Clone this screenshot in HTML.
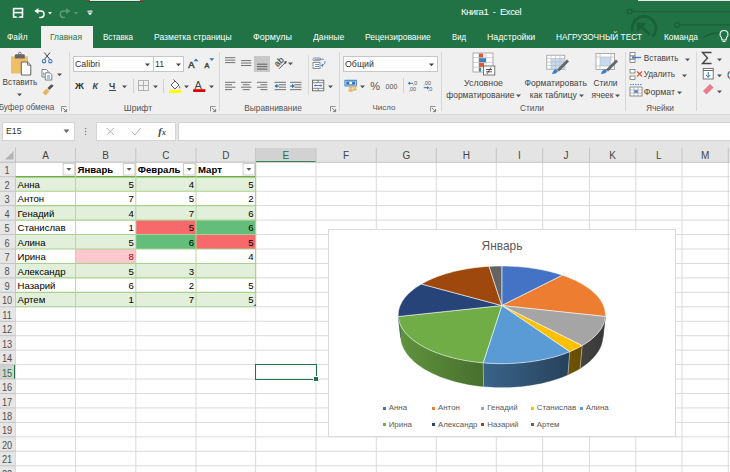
<!DOCTYPE html><html><head><meta charset="utf-8"><style>
*{box-sizing:border-box;margin:0;padding:0}
body{width:730px;height:472px;overflow:hidden;position:relative;background:#fff;font-family:"Liberation Sans",sans-serif;color:#262626}
.a{position:absolute}
.t{position:absolute;white-space:nowrap;line-height:1}
</style></head><body>

<div class="a" style="left:0;top:0;width:730px;height:48px;background:#217346"></div>
<div class="a" style="left:87px;top:0;width:56px;height:1.2px;background:#e8e8e8;border-left:3.6px solid #c8342c;border-right:3.4px solid #c8342c"></div>
<div class="a" style="left:87px;top:1.2px;width:56px;height:0.8px;background:#1a5c37"></div>
<div class="a" style="left:638px;top:0;width:92px;height:1.2px;background:#e8e8e8"></div>
<svg class="a" style="left:0;top:0" width="730" height="48">
<g stroke="#1b6039" fill="none">
<line x1="632.6" y1="11.6" x2="730" y2="11.6" stroke-width="1.3"/>
<circle cx="629.7" cy="11.6" r="2.4" stroke-width="1.4"/>
<line x1="680.2" y1="24.9" x2="730" y2="24.9" stroke-width="1.3"/>
<circle cx="677.2" cy="24.9" r="2.4" stroke-width="1.4"/>
<path d="M 632.6 31.5 A 11.9 11.9 0 1 1 652.5 36.6" stroke-width="2.9"/>
<path d="M 649.7 34.7 L 639 24.3" stroke-width="2.9"/>
<path d="M 636.6 22.4 L 646.6 23.2 L 643.5 26.5 L 640.3 29.6 L 637.4 32.2 Z" fill="#1b6039" stroke="none"/>
<path d="M 703 37.5 Q 710 33 722 32.5" stroke-width="1.4"/>
</g></svg>
<svg class="a" style="left:0;top:0" width="100" height="24">
<g fill="none" stroke="#fff" stroke-width="1.3">
<rect x="13.6" y="8.6" width="8.9" height="8.4" stroke-width="1.6"/>
<path d="M 13.6 12.6 L 22.5 12.6" stroke-width="1.6"/>
<rect x="16.6" y="15" width="2.8" height="2.5" fill="#217346" stroke="none"/>
<path d="M 34.3 11 L 38.5 8 L 38.5 14 Z" fill="#fff" stroke="none"/>
<path d="M 37.5 11 L 40.8 11 A 3.2 3.2 0 0 1 40.8 17.4 L 39.3 17.4" stroke-width="1.5"/>
</g>
<path d="M 48 12 L 52 12 L 50 14.5 Z" fill="#fff"/>
<g stroke="#5f9a78" fill="none" stroke-width="1.3">
<path d="M 67 11 L 63.5 11 A 3.2 3.2 0 0 0 63.5 17.4 L 65 17.4" stroke-width="1.5"/>
</g>
<path d="M 66.2 8 L 70.4 11 L 66.2 14 Z" fill="#5f9a78"/>
<path d="M 74 12 L 78 12 L 76 14.5 Z" fill="#5f9a78"/>
<rect x="87.5" y="10.6" width="5" height="1.1" fill="#fff"/>
<path d="M 87.5 12.6 L 92.5 12.6 L 90 15.2 Z" fill="#fff"/>
</svg>
<div class="t" style="left:460.9px;top:6.6px;font-size:9.6px;letter-spacing:-0.46px;color:#fff">Книга1&nbsp;&nbsp;-&nbsp;&nbsp;Excel</div>
<div class="a" style="left:41px;top:25.5px;width:52px;height:23px;background:#f0f0f0"></div>
<div class="t" style="left:7.4px;top:32.98px;font-size:9.30px;transform:scaleX(0.897);transform-origin:0 0;color:#fff">Файл</div>
<div class="t" style="left:50.4px;top:32.98px;font-size:9.30px;transform:scaleX(0.904);transform-origin:0 0;color:#217346">Главная</div>
<div class="t" style="left:103.2px;top:32.98px;font-size:9.30px;transform:scaleX(0.865);transform-origin:0 0;color:#fff">Вставка</div>
<div class="t" style="left:154.20000000000002px;top:32.98px;font-size:9.30px;transform:scaleX(0.920);transform-origin:0 0;color:#fff">Разметка страницы</div>
<div class="t" style="left:252.9px;top:32.98px;font-size:9.30px;transform:scaleX(0.959);transform-origin:0 0;color:#fff">Формулы</div>
<div class="t" style="left:313.2px;top:32.98px;font-size:9.30px;transform:scaleX(0.929);transform-origin:0 0;color:#fff">Данные</div>
<div class="t" style="left:365.2px;top:32.98px;font-size:9.30px;transform:scaleX(0.916);transform-origin:0 0;color:#fff">Рецензирование</div>
<div class="t" style="left:452.4px;top:32.98px;font-size:9.30px;transform:scaleX(0.832);transform-origin:0 0;color:#fff">Вид</div>
<div class="t" style="left:487.4px;top:32.98px;font-size:9.30px;transform:scaleX(0.945);transform-origin:0 0;color:#fff">Надстройки</div>
<div class="t" style="left:556.4px;top:32.98px;font-size:9.30px;transform:scaleX(0.890);transform-origin:0 0;color:#fff">НАГРУЗОЧНЫЙ ТЕСТ</div>
<div class="t" style="left:664.4px;top:32.98px;font-size:9.30px;transform:scaleX(0.897);transform-origin:0 0;color:#fff">Команда</div>
<svg class="a" style="left:716.5px;top:28px" width="14" height="16"><g fill="none" stroke="#fff" stroke-width="1.1">
<path d="M 4.5 9.5 C 2 7.5 2.5 2.5 7 2.5 C 11.5 2.5 12 7.5 9.5 9.5 L 9 12 L 5 12 Z"/><line x1="5.5" y1="13.5" x2="8.5" y2="13.5"/></g></svg>
<div class="a" style="left:0;top:48px;width:730px;height:66px;background:#f0f0f0"></div>
<div class="a" style="left:0;top:114px;width:730px;height:1px;background:#d6d6d6"></div>
<div class="a" style="left:0;top:115px;width:730px;height:33px;background:#e4e4e4"></div>
<div class="a" style="left:68.8px;top:52px;width:1px;height:59px;background:#d8d8d8"></div>
<div class="a" style="left:219.2px;top:52px;width:1px;height:59px;background:#d8d8d8"></div>
<div class="a" style="left:339.3px;top:52px;width:1px;height:59px;background:#d8d8d8"></div>
<div class="a" style="left:440.7px;top:52px;width:1px;height:59px;background:#d8d8d8"></div>
<div class="a" style="left:624.6px;top:52px;width:1px;height:59px;background:#d8d8d8"></div>
<div class="a" style="left:696.3px;top:52px;width:1px;height:59px;background:#d8d8d8"></div>
<div class="t" style="left:-123.5px;width:300px;text-align:center;top:104.09px;font-size:8.2px;color:#555;">Буфер обмена</div>
<div class="t" style="left:-12px;width:300px;text-align:center;top:103.87px;font-size:8.6px;color:#555;">Шрифт</div>
<div class="t" style="left:123px;width:300px;text-align:center;top:103.98px;font-size:8.4px;color:#555;">Выравнивание</div>
<div class="t" style="left:234px;width:300px;text-align:center;top:104.20px;font-size:8.0px;color:#555;">Число</div>
<div class="t" style="left:382px;width:300px;text-align:center;top:103.98px;font-size:8.4px;color:#555;">Стили</div>
<div class="t" style="left:510px;width:300px;text-align:center;top:103.98px;font-size:8.4px;color:#555;">Ячейки</div>
<svg class="a" style="left:61px;top:105.5px" width="7" height="7"><path d="M0.5 5.5 L0.5 0.5 L5.5 0.5" fill="none" stroke="#777" stroke-width="0.8"/><path d="M2 2 L5.6 5.6 M5.6 3 L5.6 5.6 L3 5.6" fill="none" stroke="#777" stroke-width="0.9"/></svg>
<svg class="a" style="left:209.5px;top:105.5px" width="7" height="7"><path d="M0.5 5.5 L0.5 0.5 L5.5 0.5" fill="none" stroke="#777" stroke-width="0.8"/><path d="M2 2 L5.6 5.6 M5.6 3 L5.6 5.6 L3 5.6" fill="none" stroke="#777" stroke-width="0.9"/></svg>
<svg class="a" style="left:330px;top:105.5px" width="7" height="7"><path d="M0.5 5.5 L0.5 0.5 L5.5 0.5" fill="none" stroke="#777" stroke-width="0.8"/><path d="M2 2 L5.6 5.6 M5.6 3 L5.6 5.6 L3 5.6" fill="none" stroke="#777" stroke-width="0.9"/></svg>
<svg class="a" style="left:430px;top:105.5px" width="7" height="7"><path d="M0.5 5.5 L0.5 0.5 L5.5 0.5" fill="none" stroke="#777" stroke-width="0.8"/><path d="M2 2 L5.6 5.6 M5.6 3 L5.6 5.6 L3 5.6" fill="none" stroke="#777" stroke-width="0.9"/></svg>
<svg class="a" style="left:0;top:48px" width="68" height="55">
<rect x="11" y="8.3" width="17" height="17.2" fill="#eebf66"/>
<path d="M14.8 10.6 L14.8 7.6 Q14.8 6.2 16.2 6.2 L23.4 6.2 Q24.8 6.2 24.8 7.6 L24.8 10.6 Z" fill="#666"/>
<circle cx="19.8" cy="5.5" r="1.3" fill="none" stroke="#666" stroke-width="0.9"/>
<path d="M21.3 14 L27.6 14 L30.8 17.2 L30.8 27 L21.3 27 Z" fill="#fff" stroke="#555" stroke-width="0.9"/>
<path d="M27.6 14 L27.6 17.2 L30.8 17.2" fill="none" stroke="#555" stroke-width="0.8"/>
<g fill="none" stroke="#444" stroke-width="1"><path d="M44.3 4.5 L50.3 12 M50 4.5 L44 12"/></g>
<g fill="none" stroke="#3b7fc4" stroke-width="1.1"><circle cx="44" cy="13.2" r="1.7"/><circle cx="50.3" cy="13.2" r="1.7"/></g>
<path d="M42 21.5 L46.5 21.5 L48 23 L48 29 L42 29 Z" fill="#fff" stroke="#666" stroke-width="0.8"/>
<path d="M45.3 24.8 L50 24.8 L51.8 26.6 L51.8 32 L45.3 32 Z" fill="#fff" stroke="#666" stroke-width="0.8"/>
<path d="M43.8 24.5 L43.8 27.5 M47 28 L50 28 M47 30 L50 30" stroke="#3b7fc4" stroke-width="0.9"/>
<path d="M42.5 44.5 L46.5 40.5 L49.5 43.5 L45.5 47.5 Z" fill="#e8b45a"/>
<path d="M47.5 40 L50.8 36.7 Q52.3 36.2 53 37.2 Q53.4 38.2 52.8 38.8 L49.3 42 Z" fill="#555"/>
</svg>
<div class="t" style="left:2.6px;top:79.29px;font-size:8.2px;color:#444;">Вставить</div>
<svg class="a" style="left:17.3px;top:92.5px" width="6" height="4"><path d="M0 0.5 L5 0.5 L2.5 3.2 Z" fill="#555"/></svg>
<svg class="a" style="left:56.5px;top:73.0px" width="6" height="4"><path d="M0 0.5 L5 0.5 L2.5 3.2 Z" fill="#555"/></svg>
<div class="a" style="left:72.5px;top:55.5px;width:81px;height:16.2px;background:#fff;border:1px solid #c6c6c6"></div>
<div class="a" style="left:152.5px;top:55.5px;width:31px;height:16.2px;background:#fff;border:1px solid #c6c6c6"></div>
<div class="t" style="left:75px;top:59.76px;font-size:8.8px;color:#333;">Calibri</div>
<div class="t" style="left:155px;top:59.76px;font-size:8.8px;color:#333;">11</div>
<svg class="a" style="left:145.0px;top:62.5px" width="6" height="4"><path d="M0 0.5 L5 0.5 L2.5 3.2 Z" fill="#444"/></svg>
<svg class="a" style="left:176.0px;top:62.5px" width="6" height="4"><path d="M0 0.5 L5 0.5 L2.5 3.2 Z" fill="#444"/></svg>
<svg class="a" style="left:0;top:0" width="730" height="120">
<text x="188.2" y="67.6" font-family="Liberation Sans" font-size="9.4" fill="#4a4a4a" stroke="#4a4a4a" stroke-width="0.55">A</text>
<path d="M193.6 61.2 L196 58.4 L198.4 61.2 Z" fill="#2f75c0"/>
<text x="204.6" y="67.6" font-family="Liberation Sans" font-size="7.2" fill="#4a4a4a" stroke="#4a4a4a" stroke-width="0.5">A</text>
<path d="M209.4 58.2 L214.2 58.2 L211.8 61 Z" fill="#2f75c0"/>
</svg>
<div class="t" style="left:75.3px;top:82.1px;font-size:8.8px;font-weight:bold;color:#333;transform:scaleX(1.12);transform-origin:0 0">Ж</div>
<div class="t" style="left:92.4px;top:82.1px;font-size:8.8px;font-style:italic;font-weight:bold;color:#444">К</div>
<div class="t" style="left:109px;top:82.1px;font-size:8.8px;font-weight:bold;color:#444;">Ч</div><div class="a" style="left:109px;top:89.7px;width:7px;height:0.9px;background:#444"></div>
<svg class="a" style="left:121.5px;top:84.5px" width="6" height="4"><path d="M0 0.5 L5 0.5 L2.5 3.2 Z" fill="#555"/></svg>
<div class="a" style="left:132.5px;top:79px;width:1px;height:14px;background:#d0d0d0"></div>
<svg class="a" style="left:137px;top:79px" width="14" height="14"><g fill="none" stroke="#aaa" stroke-width="0.9"><rect x="1.5" y="1.5" width="10" height="10"/><path d="M6.5 1.5 L6.5 11.5 M1.5 6.5 L11.5 6.5"/></g></svg>
<svg class="a" style="left:152.5px;top:84.5px" width="6" height="4"><path d="M0 0.5 L5 0.5 L2.5 3.2 Z" fill="#555"/></svg>
<div class="a" style="left:163px;top:79px;width:1px;height:14px;background:#d0d0d0"></div>
<svg class="a" style="left:168px;top:77px" width="16" height="18">
<path d="M3 8 L7 4 L11 8 L7 12 Z" fill="#fff" stroke="#555" stroke-width="0.9"/>
<path d="M5.5 2.5 L8 5" stroke="#555" stroke-width="0.9"/>
<path d="M11.5 8.5 Q13 10.5 12 11.5 Q10.5 11 11.5 8.5Z" fill="#3b7fc4"/>
<rect x="1" y="13" width="12" height="3" fill="#ffff00"/></svg>
<svg class="a" style="left:183.5px;top:84.5px" width="6" height="4"><path d="M0 0.5 L5 0.5 L2.5 3.2 Z" fill="#555"/></svg>
<svg class="a" style="left:193px;top:77px" width="14" height="18">
<text x="1.5" y="12" font-family="Liberation Sans" font-size="11" fill="#444">A</text>
<rect x="0.2" y="12.2" width="12" height="2.8" fill="#e00000"/></svg>
<svg class="a" style="left:208.5px;top:84.5px" width="6" height="4"><path d="M0 0.5 L5 0.5 L2.5 3.2 Z" fill="#555"/></svg>
<div class="a" style="left:254.3px;top:55.5px;width:15.5px;height:16.2px;background:#c8c8c8"></div>
<svg class="a" style="left:220px;top:50px" width="120" height="50"><g stroke="#6a6a6a" stroke-width="0.95" fill="none"><path d="M5 7.70 L15.3 7.70" stroke="#6a6a6a"/><path d="M5 10.15 L15.3 10.15" stroke="#6a6a6a"/><path d="M5 12.60 L15.3 12.60" stroke="#6a6a6a"/><path d="M21 10.60 L31.3 10.60" stroke="#6a6a6a"/><path d="M21 13.05 L31.3 13.05" stroke="#6a6a6a"/><path d="M21 15.50 L31.3 15.50" stroke="#6a6a6a"/><path d="M37 14.20 L47.3 14.20" stroke="#5a5a5a"/><path d="M37 16.65 L47.3 16.65" stroke="#5a5a5a"/><path d="M37 19.10 L47.3 19.10" stroke="#5a5a5a"/><path d="M5 32.30 L15.4 32.30" stroke="#6a6a6a"/><path d="M5 34.75 L12 34.75" stroke="#6a6a6a"/><path d="M5 37.20 L15.4 37.20" stroke="#6a6a6a"/><path d="M5 39.65 L12 39.65" stroke="#6a6a6a"/><path d="M21 32.30 L31.4 32.30" stroke="#6a6a6a"/><path d="M22.7 34.75 L29.7 34.75" stroke="#6a6a6a"/><path d="M21 37.20 L31.4 37.20" stroke="#6a6a6a"/><path d="M22.7 39.65 L29.7 39.65" stroke="#6a6a6a"/><path d="M37 32.30 L47.4 32.30" stroke="#6a6a6a"/><path d="M40.4 34.75 L47.4 34.75" stroke="#6a6a6a"/><path d="M37 37.20 L47.4 37.20" stroke="#6a6a6a"/><path d="M40.4 39.65 L47.4 39.65" stroke="#6a6a6a"/><path d="M54.5 32.30 L66.0 32.30" stroke="#6a6a6a"/><path d="M59.0 34.75 L66.0 34.75" stroke="#6a6a6a"/><path d="M59.0 37.20 L66.0 37.20" stroke="#6a6a6a"/><path d="M54.5 39.65 L66.0 39.65" stroke="#6a6a6a"/><path d="M70 32.30 L81.5 32.30" stroke="#6a6a6a"/><path d="M74.5 34.75 L81.5 34.75" stroke="#6a6a6a"/><path d="M74.5 37.20 L81.5 37.20" stroke="#6a6a6a"/><path d="M70 39.65 L81.5 39.65" stroke="#6a6a6a"/><path d="M55 36 L59 36" stroke="#2f75c0" stroke-width="1.2"/><path d="M54.5 36 L57.3 33.8 L57.3 38.2 Z" fill="#2f75c0" stroke="none"/><path d="M70 36 L74 36" stroke="#2f75c0" stroke-width="1.2"/><path d="M74.8 36 L72 33.8 L72 38.2 Z" fill="#2f75c0" stroke="none"/><text x="54.5" y="16" font-family="Liberation Sans" font-size="8.6" fill="#505050" stroke="#505050" stroke-width="0.25" transform="rotate(-45 57.5 13)">ab</text><path d="M59 18.8 L65.5 12.3" stroke="#505050" stroke-width="1"/><path d="M66.8 11 L63.6 11.8 L66 14.2 Z" fill="#505050" stroke="none"/><rect x="93" y="8" width="7.5" height="2.6" rx="1" fill="#fff" stroke="#777" stroke-width="0.8"/><rect x="93" y="12.5" width="7" height="6" fill="#fff" stroke="#777" stroke-width="0.8"/><path d="M94.5 9.3 L104 9.3 M95 14.5 L99 14.5 M95 16.5 L99 16.5" stroke="#3b7fc4" stroke-width="0.8"/><path d="M105 11 Q105.5 14.5 101.5 15.5" stroke="#3b7fc4" stroke-width="0.9"/><path d="M101 15.5 L103 13.8 L103 17 Z" fill="#3b7fc4" stroke="none"/><rect x="92.5" y="30.2" width="11.3" height="10.6" fill="#fff" stroke="#666" stroke-width="0.9"/><path d="M92.5 32.7 L103.8 32.7 M92.5 38.3 L103.8 38.3 M98.1 30.2 L98.1 32.7 M98.1 38.3 L98.1 40.8" stroke="#666" stroke-width="0.8"/><path d="M94.5 35.5 L101.8 35.5" stroke="#2f75c0" stroke-width="0.9"/><path d="M94 35.5 L95.8 34.2 L95.8 36.8 Z M102.3 35.5 L100.5 34.2 L100.5 36.8 Z" fill="#2f75c0" stroke="none"/></g></svg>
<svg class="a" style="left:288.3px;top:62.1px" width="6" height="4"><path d="M0 0.5 L5 0.5 L2.5 3.2 Z" fill="#555"/></svg>
<svg class="a" style="left:328.2px;top:84.5px" width="6" height="4"><path d="M0 0.5 L5 0.5 L2.5 3.2 Z" fill="#555"/></svg>
<div class="a" style="left:307.7px;top:55px;width:1px;height:40px;background:#dadada"></div>
<div class="a" style="left:342.5px;top:55.5px;width:95px;height:16.2px;background:#fff;border:1px solid #c6c6c6"></div>
<div class="t" style="left:345px;top:59.76px;font-size:8.8px;color:#333;">Общий</div>
<svg class="a" style="left:429.0px;top:62.5px" width="6" height="4"><path d="M0 0.5 L5 0.5 L2.5 3.2 Z" fill="#444"/></svg>
<svg class="a" style="left:0;top:0" width="730" height="120">
<rect x="345" y="80.3" width="11.3" height="5.6" fill="#fff" stroke="#2f75c0" stroke-width="1"/>
<rect x="346.2" y="81.4" width="9" height="3.4" fill="#2f75c0"/>
<ellipse cx="350.7" cy="83.1" rx="1.6" ry="1.3" fill="#fff"/>
<rect x="349" y="86.5" width="3.5" height="2.2" fill="#e8b45a"/><rect x="353" y="85.5" width="3.5" height="2.2" fill="#e8b45a"/>
<rect x="348.6" y="89.3" width="4" height="2.4" fill="#e8b45a"/><rect x="353" y="88.3" width="3.5" height="2.2" fill="#e8b45a"/>
<text x="370.3" y="90.2" font-family="Liberation Sans" font-size="11" fill="#555">%</text>
<text x="385.6" y="88.5" font-family="Liberation Sans" font-size="7.1" fill="#555">000</text>
<g font-family="Liberation Sans" font-size="5.4" fill="#555">
<text x="412.8" y="85.3">,0</text><text x="408.5" y="91.2">,00</text>
<text x="423.5" y="85.3">,00</text><text x="427.8" y="91.2">,0</text></g>
<path d="M408.5 83.3 L413 83.3" stroke="#2f75c0" stroke-width="1"/><path d="M407.8 83.3 L410 81.5 L410 85.1 Z" fill="#2f75c0"/>
<path d="M423.8 87.7 L428.5 87.7" stroke="#2f75c0" stroke-width="1"/><path d="M429.2 87.7 L427 85.9 L427 89.5 Z" fill="#2f75c0"/>
</svg>
<svg class="a" style="left:360.1px;top:84.8px" width="6" height="4"><path d="M0 0.5 L5 0.5 L2.5 3.2 Z" fill="#555"/></svg>
<div class="a" style="left:402.5px;top:78px;width:1px;height:15px;background:#d4d4d4"></div>
<svg class="a" style="left:470px;top:50px" width="160" height="28">
<g stroke="#999" stroke-width="0.8" fill="#fff"><rect x="3" y="3" width="20" height="19"/></g>
<g stroke="#bbb" stroke-width="0.7"><path d="M3 7.7 L23 7.7 M3 12.4 L23 12.4 M3 17.1 L23 17.1 M9 3 L9 22 M16 3 L16 22"/></g>
<rect x="9" y="3.5" width="4" height="4" fill="#e5572f"/><rect x="9" y="8.2" width="7" height="4" fill="#3b7fc4"/><rect x="9" y="12.9" width="5" height="4" fill="#e5572f"/><rect x="9" y="17.6" width="2" height="4" fill="#3b7fc4"/>
<rect x="13.5" y="16" width="11.3" height="9" fill="#fff" stroke="#555" stroke-width="0.8"/>
<path d="M16 19.5 L22 19.5 M16 21.8 L22 21.8 M21 17.5 L17 24" stroke="#333" stroke-width="0.8"/>
<g stroke="#999" stroke-width="0.8" fill="#fff"><rect x="76.8" y="5.2" width="18" height="14"/></g>
<rect x="81" y="8.5" width="13.5" height="10.5" fill="#c5d9ef"/>
<g stroke="#bbb" stroke-width="0.7"><path d="M76.8 8.5 L94.8 8.5 M76.8 12 L94.8 12 M76.8 15.5 L94.8 15.5 M81 5.2 L81 19.2 M85.5 5.2 L85.5 19.2 M90 5.2 L90 19.2"/></g>
<path d="M82 24 Q83 20 86 19 L88 21 Q87 24 82 24Z" fill="#3b7fc4"/><path d="M87 19.5 L97 9.5 L99 11.5 L89 21.5 Z" fill="#666"/>
<g stroke="#999" stroke-width="0.8" fill="#fff"><rect x="126" y="3.4" width="18.6" height="16"/></g>
<rect x="130" y="7" width="11" height="9" fill="#c5d9ef"/>
<g stroke="#bbb" stroke-width="0.7"><path d="M126 7 L144.6 7 M126 16 L144.6 16 M130 3.4 L130 19.4 M141 3.4 L141 19.4"/></g>
<path d="M131 24 Q132 20 135 19 L137 21 Q136 24 131 24Z" fill="#3b7fc4"/><path d="M136 19.5 L146 9.5 L148 11.5 L138 21.5 Z" fill="#666"/>
</svg>
<div class="t" style="left:333.5px;width:300px;text-align:center;top:79.16px;font-size:8.8px;color:#444;">Условное</div>
<div class="t" style="left:330.3px;width:300px;text-align:center;top:90.92px;font-size:8.5px;color:#444;">форматирование</div>
<svg class="a" style="left:516.2px;top:94.0px" width="6" height="4"><path d="M0 0.5 L5 0.5 L2.5 3.2 Z" fill="#555"/></svg>
<div class="t" style="left:405.70000000000005px;width:300px;text-align:center;top:79.27px;font-size:8.6px;color:#444;">Форматировать</div>
<div class="t" style="left:403.29999999999995px;width:300px;text-align:center;top:90.87px;font-size:8.6px;color:#444;">как таблицу</div>
<svg class="a" style="left:578.5px;top:94.0px" width="6" height="4"><path d="M0 0.5 L5 0.5 L2.5 3.2 Z" fill="#555"/></svg>
<div class="t" style="left:455.5px;width:300px;text-align:center;top:79.38px;font-size:8.4px;color:#444;">Стили</div>
<div class="t" style="left:452.5px;width:300px;text-align:center;top:90.98px;font-size:8.4px;color:#444;">ячеек</div>
<svg class="a" style="left:614.8px;top:94.0px" width="6" height="4"><path d="M0 0.5 L5 0.5 L2.5 3.2 Z" fill="#555"/></svg>
<svg class="a" style="left:628px;top:50px" width="20" height="50">
<g stroke="#777" stroke-width="0.8" fill="#fff">
<rect x="2" y="2.5" width="5" height="3.5"/><rect x="2" y="9" width="5" height="3.5"/><rect x="2" y="6" width="5" height="3"/>
<rect x="2" y="19.5" width="5" height="3.5"/><rect x="2" y="26" width="5" height="3.5"/>
<rect x="2" y="37" width="12" height="9"/></g>
<path d="M4 7.5 L13 7.5" stroke="#3b7fc4" stroke-width="1.3"/><path d="M4 7.5 L6 5.8 M4 7.5 L6 9.2" stroke="#3b7fc4" stroke-width="0.9"/>
<path d="M9 21.5 L14 26.5 M14 21.5 L9 26.5" stroke="#e5572f" stroke-width="1.1"/>
<path d="M2 34.5 L14 34.5" stroke="#3b7fc4" stroke-width="0.9" stroke-dasharray="1.5 1"/>
<path d="M2 40 L14 40 M2 43 L14 43 M6 37 L6 46 M10 37 L10 46" stroke="#999" stroke-width="0.6"/>
<rect x="6.3" y="40.3" width="3.5" height="2.5" fill="#3b7fc4"/>
</svg>
<div class="t" style="left:643.7px;top:54.79px;font-size:8.2px;color:#444;">Вставить</div>
<svg class="a" style="left:684.5px;top:57.5px" width="6" height="4"><path d="M0 0.5 L5 0.5 L2.5 3.2 Z" fill="#555"/></svg>
<div class="t" style="left:643.7px;top:71.29px;font-size:8.2px;color:#444;">Удалить</div>
<svg class="a" style="left:681.5px;top:74.0px" width="6" height="4"><path d="M0 0.5 L5 0.5 L2.5 3.2 Z" fill="#555"/></svg>
<div class="t" style="left:643.7px;top:87.86px;font-size:8.8px;color:#444;">Формат</div>
<svg class="a" style="left:676.5px;top:90.8px" width="6" height="4"><path d="M0 0.5 L5 0.5 L2.5 3.2 Z" fill="#555"/></svg>
<svg class="a" style="left:698px;top:50px" width="32" height="48">
<path d="M13.5 2.5 L4.5 2.5 L9.5 8 L4.5 13.5 L13.5 13.5" fill="none" stroke="#444" stroke-width="1.4"/>
<rect x="5.2" y="18.5" width="10" height="10.5" fill="#fff" stroke="#666" stroke-width="0.9"/><path d="M5.2 20.5 L15.2 20.5" stroke="#666" stroke-width="1"/>
<path d="M10.2 22 L10.2 27.3 M8 25 L10.2 27.3 L12.4 25" fill="none" stroke="#2f75c0" stroke-width="1"/>
<path d="M5 41 L12 34 L15.5 37.5 L8.5 44.5 Z" fill="#e87c8c"/>
<text x="29" y="29" font-family="Liberation Sans" font-size="10" fill="#444">С</text>
</svg>
<svg class="a" style="left:716.5px;top:57.5px" width="6" height="4"><path d="M0 0.5 L5 0.5 L2.5 3.2 Z" fill="#555"/></svg>
<svg class="a" style="left:716.5px;top:74.0px" width="6" height="4"><path d="M0 0.5 L5 0.5 L2.5 3.2 Z" fill="#555"/></svg>
<svg class="a" style="left:716.5px;top:90.0px" width="6" height="4"><path d="M0 0.5 L5 0.5 L2.5 3.2 Z" fill="#555"/></svg>
<div class="a" style="left:1.5px;top:122.3px;width:73.3px;height:18.4px;background:#fff;border:1px solid #d4d4d4"></div>
<div class="t" style="left:6px;top:127px;font-size:8.8px;color:#333">E15</div>
<svg class="a" style="left:63px;top:129px" width="8" height="5"><path d="M0.5 0.5 L6.5 0.5 L3.5 4 Z" fill="#666"/></svg>
<svg class="a" style="left:84px;top:124px" width="4" height="16"><circle cx="1.6" cy="4.6" r="0.8" fill="#888"/><circle cx="1.6" cy="7.5" r="0.8" fill="#888"/><circle cx="1.6" cy="10.5" r="0.8" fill="#888"/></svg>
<div class="a" style="left:96.4px;top:122.4px;width:79.6px;height:18.3px;background:#fff;border:1px solid #d4d4d4"></div>
<svg class="a" style="left:96px;top:122px" width="80" height="19"><g stroke="#b5b5b5" stroke-width="1" fill="none">
<path d="M 10.8 6 L 17.8 13 M 17.8 6 L 10.8 13"/><path d="M 35.8 9.8 L 39 13 L 44.6 6"/></g>
<text x="62.3" y="13.3" font-family="Liberation Serif" font-style="italic" font-weight="bold" font-size="10.5" fill="#444">f</text><text x="66" y="13.3" font-family="Liberation Serif" font-style="italic" font-weight="bold" font-size="7.8" fill="#444">x</text></svg>
<div class="a" style="left:178.3px;top:122.4px;width:560px;height:18.3px;background:#fff;border:1px solid #d4d4d4"></div>
<div class="a" style="left:0;top:147.7px;width:730px;height:14.60px;background:#e4e4e4"></div>
<div class="a" style="left:0;top:162.3px;width:15.5px;height:309.70px;background:#e6e6e6"></div>
<div class="a" style="left:255.6px;top:147.7px;width:60.40px;height:14.60px;background:#d2d2d2"></div>
<div class="a" style="left:255.6px;top:160.70px;width:60.40px;height:1.6px;background:#217346"></div>
<div class="a" style="left:0;top:364.60px;width:15.5px;height:14.45px;background:#d2d2d2"></div>
<div class="a" style="left:13.9px;top:364.60px;width:1.6px;height:14.45px;background:#217346"></div>
<svg class="a" style="left:0;top:0" width="730" height="472">
<line x1="15.5" y1="162.3" x2="15.5" y2="472" stroke="#dadada" stroke-width="1"/>
<line x1="15.5" y1="147.7" x2="15.5" y2="162.3" stroke="#c4c4c4" stroke-width="1"/>
<line x1="75.6" y1="162.3" x2="75.6" y2="472" stroke="#dadada" stroke-width="1"/>
<line x1="75.6" y1="147.7" x2="75.6" y2="162.3" stroke="#c4c4c4" stroke-width="1"/>
<line x1="135.8" y1="162.3" x2="135.8" y2="472" stroke="#dadada" stroke-width="1"/>
<line x1="135.8" y1="147.7" x2="135.8" y2="162.3" stroke="#c4c4c4" stroke-width="1"/>
<line x1="196.0" y1="162.3" x2="196.0" y2="472" stroke="#dadada" stroke-width="1"/>
<line x1="196.0" y1="147.7" x2="196.0" y2="162.3" stroke="#c4c4c4" stroke-width="1"/>
<line x1="255.6" y1="162.3" x2="255.6" y2="472" stroke="#dadada" stroke-width="1"/>
<line x1="255.6" y1="147.7" x2="255.6" y2="162.3" stroke="#c4c4c4" stroke-width="1"/>
<line x1="316.0" y1="162.3" x2="316.0" y2="472" stroke="#dadada" stroke-width="1"/>
<line x1="316.0" y1="147.7" x2="316.0" y2="162.3" stroke="#c4c4c4" stroke-width="1"/>
<line x1="376.3" y1="162.3" x2="376.3" y2="472" stroke="#dadada" stroke-width="1"/>
<line x1="376.3" y1="147.7" x2="376.3" y2="162.3" stroke="#c4c4c4" stroke-width="1"/>
<line x1="436.3" y1="162.3" x2="436.3" y2="472" stroke="#dadada" stroke-width="1"/>
<line x1="436.3" y1="147.7" x2="436.3" y2="162.3" stroke="#c4c4c4" stroke-width="1"/>
<line x1="496.3" y1="162.3" x2="496.3" y2="472" stroke="#dadada" stroke-width="1"/>
<line x1="496.3" y1="147.7" x2="496.3" y2="162.3" stroke="#c4c4c4" stroke-width="1"/>
<line x1="542.7" y1="162.3" x2="542.7" y2="472" stroke="#dadada" stroke-width="1"/>
<line x1="542.7" y1="147.7" x2="542.7" y2="162.3" stroke="#c4c4c4" stroke-width="1"/>
<line x1="589.5" y1="162.3" x2="589.5" y2="472" stroke="#dadada" stroke-width="1"/>
<line x1="589.5" y1="147.7" x2="589.5" y2="162.3" stroke="#c4c4c4" stroke-width="1"/>
<line x1="635.8" y1="162.3" x2="635.8" y2="472" stroke="#dadada" stroke-width="1"/>
<line x1="635.8" y1="147.7" x2="635.8" y2="162.3" stroke="#c4c4c4" stroke-width="1"/>
<line x1="682.0" y1="162.3" x2="682.0" y2="472" stroke="#dadada" stroke-width="1"/>
<line x1="682.0" y1="147.7" x2="682.0" y2="162.3" stroke="#c4c4c4" stroke-width="1"/>
<line x1="728.3" y1="162.3" x2="728.3" y2="472" stroke="#dadada" stroke-width="1"/>
<line x1="728.3" y1="147.7" x2="728.3" y2="162.3" stroke="#c4c4c4" stroke-width="1"/>
<line x1="15.5" y1="176.75" x2="730" y2="176.75" stroke="#dadada" stroke-width="1"/>
<line x1="0" y1="176.75" x2="15.5" y2="176.75" stroke="#c4c4c4" stroke-width="1"/>
<line x1="15.5" y1="191.20" x2="730" y2="191.20" stroke="#dadada" stroke-width="1"/>
<line x1="0" y1="191.20" x2="15.5" y2="191.20" stroke="#c4c4c4" stroke-width="1"/>
<line x1="15.5" y1="205.65" x2="730" y2="205.65" stroke="#dadada" stroke-width="1"/>
<line x1="0" y1="205.65" x2="15.5" y2="205.65" stroke="#c4c4c4" stroke-width="1"/>
<line x1="15.5" y1="220.10" x2="730" y2="220.10" stroke="#dadada" stroke-width="1"/>
<line x1="0" y1="220.10" x2="15.5" y2="220.10" stroke="#c4c4c4" stroke-width="1"/>
<line x1="15.5" y1="234.55" x2="730" y2="234.55" stroke="#dadada" stroke-width="1"/>
<line x1="0" y1="234.55" x2="15.5" y2="234.55" stroke="#c4c4c4" stroke-width="1"/>
<line x1="15.5" y1="249.00" x2="730" y2="249.00" stroke="#dadada" stroke-width="1"/>
<line x1="0" y1="249.00" x2="15.5" y2="249.00" stroke="#c4c4c4" stroke-width="1"/>
<line x1="15.5" y1="263.45" x2="730" y2="263.45" stroke="#dadada" stroke-width="1"/>
<line x1="0" y1="263.45" x2="15.5" y2="263.45" stroke="#c4c4c4" stroke-width="1"/>
<line x1="15.5" y1="277.90" x2="730" y2="277.90" stroke="#dadada" stroke-width="1"/>
<line x1="0" y1="277.90" x2="15.5" y2="277.90" stroke="#c4c4c4" stroke-width="1"/>
<line x1="15.5" y1="292.35" x2="730" y2="292.35" stroke="#dadada" stroke-width="1"/>
<line x1="0" y1="292.35" x2="15.5" y2="292.35" stroke="#c4c4c4" stroke-width="1"/>
<line x1="15.5" y1="306.80" x2="730" y2="306.80" stroke="#dadada" stroke-width="1"/>
<line x1="0" y1="306.80" x2="15.5" y2="306.80" stroke="#c4c4c4" stroke-width="1"/>
<line x1="15.5" y1="321.25" x2="730" y2="321.25" stroke="#dadada" stroke-width="1"/>
<line x1="0" y1="321.25" x2="15.5" y2="321.25" stroke="#c4c4c4" stroke-width="1"/>
<line x1="15.5" y1="335.70" x2="730" y2="335.70" stroke="#dadada" stroke-width="1"/>
<line x1="0" y1="335.70" x2="15.5" y2="335.70" stroke="#c4c4c4" stroke-width="1"/>
<line x1="15.5" y1="350.15" x2="730" y2="350.15" stroke="#dadada" stroke-width="1"/>
<line x1="0" y1="350.15" x2="15.5" y2="350.15" stroke="#c4c4c4" stroke-width="1"/>
<line x1="15.5" y1="364.60" x2="730" y2="364.60" stroke="#dadada" stroke-width="1"/>
<line x1="0" y1="364.60" x2="15.5" y2="364.60" stroke="#c4c4c4" stroke-width="1"/>
<line x1="15.5" y1="379.05" x2="730" y2="379.05" stroke="#dadada" stroke-width="1"/>
<line x1="0" y1="379.05" x2="15.5" y2="379.05" stroke="#c4c4c4" stroke-width="1"/>
<line x1="15.5" y1="393.50" x2="730" y2="393.50" stroke="#dadada" stroke-width="1"/>
<line x1="0" y1="393.50" x2="15.5" y2="393.50" stroke="#c4c4c4" stroke-width="1"/>
<line x1="15.5" y1="407.95" x2="730" y2="407.95" stroke="#dadada" stroke-width="1"/>
<line x1="0" y1="407.95" x2="15.5" y2="407.95" stroke="#c4c4c4" stroke-width="1"/>
<line x1="15.5" y1="422.40" x2="730" y2="422.40" stroke="#dadada" stroke-width="1"/>
<line x1="0" y1="422.40" x2="15.5" y2="422.40" stroke="#c4c4c4" stroke-width="1"/>
<line x1="15.5" y1="436.85" x2="730" y2="436.85" stroke="#dadada" stroke-width="1"/>
<line x1="0" y1="436.85" x2="15.5" y2="436.85" stroke="#c4c4c4" stroke-width="1"/>
<line x1="15.5" y1="451.30" x2="730" y2="451.30" stroke="#dadada" stroke-width="1"/>
<line x1="0" y1="451.30" x2="15.5" y2="451.30" stroke="#c4c4c4" stroke-width="1"/>
<line x1="15.5" y1="465.75" x2="730" y2="465.75" stroke="#dadada" stroke-width="1"/>
<line x1="0" y1="465.75" x2="15.5" y2="465.75" stroke="#c4c4c4" stroke-width="1"/>
<line x1="15.5" y1="480.20" x2="730" y2="480.20" stroke="#dadada" stroke-width="1"/>
<line x1="0" y1="480.20" x2="15.5" y2="480.20" stroke="#c4c4c4" stroke-width="1"/>
<line x1="0" y1="162.3" x2="730" y2="162.3" stroke="#c4c4c4" stroke-width="1"/>
<path d="M5 159.5 L13.5 159.5 L13.5 151 Z" fill="#b4b4b4"/>
</svg>
<div class="t" style="left:25.55px;width:40px;text-align:center;top:151.30px;font-size:10px;color:#444">A</div>
<div class="t" style="left:85.70px;width:40px;text-align:center;top:151.30px;font-size:10px;color:#444">B</div>
<div class="t" style="left:145.90px;width:40px;text-align:center;top:151.30px;font-size:10px;color:#444">C</div>
<div class="t" style="left:205.80px;width:40px;text-align:center;top:151.30px;font-size:10px;color:#444">D</div>
<div class="t" style="left:265.80px;width:40px;text-align:center;top:151.30px;font-size:10px;color:#217346">E</div>
<div class="t" style="left:326.15px;width:40px;text-align:center;top:151.30px;font-size:10px;color:#444">F</div>
<div class="t" style="left:386.30px;width:40px;text-align:center;top:151.30px;font-size:10px;color:#444">G</div>
<div class="t" style="left:446.30px;width:40px;text-align:center;top:151.30px;font-size:10px;color:#444">H</div>
<div class="t" style="left:499.50px;width:40px;text-align:center;top:151.30px;font-size:10px;color:#444">I</div>
<div class="t" style="left:546.10px;width:40px;text-align:center;top:151.30px;font-size:10px;color:#444">J</div>
<div class="t" style="left:592.65px;width:40px;text-align:center;top:151.30px;font-size:10px;color:#444">K</div>
<div class="t" style="left:638.90px;width:40px;text-align:center;top:151.30px;font-size:10px;color:#444">L</div>
<div class="t" style="left:685.15px;width:40px;text-align:center;top:151.30px;font-size:10px;color:#444">M</div>
<div class="t" style="left:-3.5px;width:20px;text-align:center;top:166.30px;font-size:10px;transform:scaleX(0.92);color:#505050">1</div>
<div class="t" style="left:-3.5px;width:20px;text-align:center;top:180.75px;font-size:10px;transform:scaleX(0.92);color:#505050">2</div>
<div class="t" style="left:-3.5px;width:20px;text-align:center;top:195.20px;font-size:10px;transform:scaleX(0.92);color:#505050">3</div>
<div class="t" style="left:-3.5px;width:20px;text-align:center;top:209.65px;font-size:10px;transform:scaleX(0.92);color:#505050">4</div>
<div class="t" style="left:-3.5px;width:20px;text-align:center;top:224.10px;font-size:10px;transform:scaleX(0.92);color:#505050">5</div>
<div class="t" style="left:-3.5px;width:20px;text-align:center;top:238.55px;font-size:10px;transform:scaleX(0.92);color:#505050">6</div>
<div class="t" style="left:-3.5px;width:20px;text-align:center;top:253.00px;font-size:10px;transform:scaleX(0.92);color:#505050">7</div>
<div class="t" style="left:-3.5px;width:20px;text-align:center;top:267.45px;font-size:10px;transform:scaleX(0.92);color:#505050">8</div>
<div class="t" style="left:-3.5px;width:20px;text-align:center;top:281.90px;font-size:10px;transform:scaleX(0.92);color:#505050">9</div>
<div class="t" style="left:-3.5px;width:20px;text-align:center;top:296.35px;font-size:10px;transform:scaleX(0.92);color:#505050">10</div>
<div class="t" style="left:-3.5px;width:20px;text-align:center;top:310.80px;font-size:10px;transform:scaleX(0.92);color:#505050">11</div>
<div class="t" style="left:-3.5px;width:20px;text-align:center;top:325.25px;font-size:10px;transform:scaleX(0.92);color:#505050">12</div>
<div class="t" style="left:-3.5px;width:20px;text-align:center;top:339.70px;font-size:10px;transform:scaleX(0.92);color:#505050">13</div>
<div class="t" style="left:-3.5px;width:20px;text-align:center;top:354.15px;font-size:10px;transform:scaleX(0.92);color:#505050">14</div>
<div class="t" style="left:-3.5px;width:20px;text-align:center;top:368.60px;font-size:10px;transform:scaleX(0.92);color:#217346">15</div>
<div class="t" style="left:-3.5px;width:20px;text-align:center;top:383.05px;font-size:10px;transform:scaleX(0.92);color:#505050">16</div>
<div class="t" style="left:-3.5px;width:20px;text-align:center;top:397.50px;font-size:10px;transform:scaleX(0.92);color:#505050">17</div>
<div class="t" style="left:-3.5px;width:20px;text-align:center;top:411.95px;font-size:10px;transform:scaleX(0.92);color:#505050">18</div>
<div class="t" style="left:-3.5px;width:20px;text-align:center;top:426.40px;font-size:10px;transform:scaleX(0.92);color:#505050">19</div>
<div class="t" style="left:-3.5px;width:20px;text-align:center;top:440.85px;font-size:10px;transform:scaleX(0.92);color:#505050">20</div>
<div class="t" style="left:-3.5px;width:20px;text-align:center;top:455.30px;font-size:10px;transform:scaleX(0.92);color:#505050">21</div>
<div class="t" style="left:-3.5px;width:20px;text-align:center;top:469.75px;font-size:10px;transform:scaleX(0.92);color:#505050">22</div>
<div class="a" style="left:15.50px;top:176.75px;width:60.10px;height:14.45px;background:#e2efda"></div>
<div class="a" style="left:75.60px;top:176.75px;width:60.20px;height:14.45px;background:#e2efda"></div>
<div class="a" style="left:135.80px;top:176.75px;width:60.20px;height:14.45px;background:#e2efda"></div>
<div class="a" style="left:196.00px;top:176.75px;width:59.60px;height:14.45px;background:#e2efda"></div>
<div class="a" style="left:15.50px;top:191.20px;width:60.10px;height:14.45px;background:#ffffff"></div>
<div class="a" style="left:75.60px;top:191.20px;width:60.20px;height:14.45px;background:#ffffff"></div>
<div class="a" style="left:135.80px;top:191.20px;width:60.20px;height:14.45px;background:#ffffff"></div>
<div class="a" style="left:196.00px;top:191.20px;width:59.60px;height:14.45px;background:#ffffff"></div>
<div class="a" style="left:15.50px;top:205.65px;width:60.10px;height:14.45px;background:#e2efda"></div>
<div class="a" style="left:75.60px;top:205.65px;width:60.20px;height:14.45px;background:#e2efda"></div>
<div class="a" style="left:135.80px;top:205.65px;width:60.20px;height:14.45px;background:#e2efda"></div>
<div class="a" style="left:196.00px;top:205.65px;width:59.60px;height:14.45px;background:#e2efda"></div>
<div class="a" style="left:15.50px;top:220.10px;width:60.10px;height:14.45px;background:#ffffff"></div>
<div class="a" style="left:75.60px;top:220.10px;width:60.20px;height:14.45px;background:#ffffff"></div>
<div class="a" style="left:135.80px;top:220.10px;width:60.20px;height:14.45px;background:#f8696b"></div>
<div class="a" style="left:196.00px;top:220.10px;width:59.60px;height:14.45px;background:#63be7b"></div>
<div class="a" style="left:15.50px;top:234.55px;width:60.10px;height:14.45px;background:#e2efda"></div>
<div class="a" style="left:75.60px;top:234.55px;width:60.20px;height:14.45px;background:#e2efda"></div>
<div class="a" style="left:135.80px;top:234.55px;width:60.20px;height:14.45px;background:#63be7b"></div>
<div class="a" style="left:196.00px;top:234.55px;width:59.60px;height:14.45px;background:#f8696b"></div>
<div class="a" style="left:15.50px;top:249.00px;width:60.10px;height:14.45px;background:#ffffff"></div>
<div class="a" style="left:75.60px;top:249.00px;width:60.20px;height:14.45px;background:#ffc7ce"></div>
<div class="a" style="left:135.80px;top:249.00px;width:60.20px;height:14.45px;background:#ffffff"></div>
<div class="a" style="left:196.00px;top:249.00px;width:59.60px;height:14.45px;background:#ffffff"></div>
<div class="a" style="left:15.50px;top:263.45px;width:60.10px;height:14.45px;background:#e2efda"></div>
<div class="a" style="left:75.60px;top:263.45px;width:60.20px;height:14.45px;background:#e2efda"></div>
<div class="a" style="left:135.80px;top:263.45px;width:60.20px;height:14.45px;background:#e2efda"></div>
<div class="a" style="left:196.00px;top:263.45px;width:59.60px;height:14.45px;background:#e2efda"></div>
<div class="a" style="left:15.50px;top:277.90px;width:60.10px;height:14.45px;background:#ffffff"></div>
<div class="a" style="left:75.60px;top:277.90px;width:60.20px;height:14.45px;background:#ffffff"></div>
<div class="a" style="left:135.80px;top:277.90px;width:60.20px;height:14.45px;background:#ffffff"></div>
<div class="a" style="left:196.00px;top:277.90px;width:59.60px;height:14.45px;background:#ffffff"></div>
<div class="a" style="left:15.50px;top:292.35px;width:60.10px;height:14.45px;background:#e2efda"></div>
<div class="a" style="left:75.60px;top:292.35px;width:60.20px;height:14.45px;background:#e2efda"></div>
<div class="a" style="left:135.80px;top:292.35px;width:60.20px;height:14.45px;background:#e2efda"></div>
<div class="a" style="left:196.00px;top:292.35px;width:59.60px;height:14.45px;background:#e2efda"></div>
<div class="a" style="left:15.5px;top:162.30px;width:240.10px;height:14.45px;background:#fff"></div>
<svg class="a" style="left:0;top:0" width="730" height="472">
<line x1="15.5" y1="191.20" x2="255.6" y2="191.20" stroke="#a9d08e" stroke-width="1.1"/>
<line x1="15.5" y1="205.65" x2="255.6" y2="205.65" stroke="#a9d08e" stroke-width="1.1"/>
<line x1="15.5" y1="220.10" x2="255.6" y2="220.10" stroke="#a9d08e" stroke-width="1.1"/>
<line x1="15.5" y1="234.55" x2="255.6" y2="234.55" stroke="#a9d08e" stroke-width="1.1"/>
<line x1="15.5" y1="249.00" x2="255.6" y2="249.00" stroke="#a9d08e" stroke-width="1.1"/>
<line x1="15.5" y1="263.45" x2="255.6" y2="263.45" stroke="#a9d08e" stroke-width="1.1"/>
<line x1="15.5" y1="277.90" x2="255.6" y2="277.90" stroke="#a9d08e" stroke-width="1.1"/>
<line x1="15.5" y1="292.35" x2="255.6" y2="292.35" stroke="#a9d08e" stroke-width="1.1"/>
<line x1="15.5" y1="306.80" x2="255.6" y2="306.80" stroke="#a9d08e" stroke-width="1.1"/>
<line x1="15.5" y1="176.75" x2="255.6" y2="176.75" stroke="#70ad47" stroke-width="1.3"/>
<line x1="15.5" y1="176.75" x2="15.5" y2="306.80" stroke="#b6d7a0" stroke-width="1"/>
<line x1="75.6" y1="162.30" x2="75.6" y2="306.80" stroke="#b6d7a0" stroke-width="1"/>
<line x1="135.8" y1="162.30" x2="135.8" y2="306.80" stroke="#b6d7a0" stroke-width="1"/>
<line x1="196.0" y1="162.30" x2="196.0" y2="306.80" stroke="#b6d7a0" stroke-width="1"/>
<line x1="255.6" y1="162.30" x2="255.6" y2="306.80" stroke="#b6d7a0" stroke-width="1"/>
<line x1="255.6" y1="162.3" x2="255.6" y2="306.80" stroke="#a9d08e" stroke-width="1.1"/>
<path d="M253.5 306 L255.8 306 L255.8 303.7 Z" fill="#2f5597"/>
<line x1="0" y1="162.3" x2="255.6" y2="162.3" stroke="#c4c4c4" stroke-width="1"/>
<rect x="63.10" y="163.6" width="11.6" height="11.4" fill="#fff" stroke="#c6c6c6" stroke-width="0.9"/>
<path d="M66.40 168 L71.40 168 L68.90 170.8 Z" fill="#555"/>
<rect x="123.30" y="163.6" width="11.6" height="11.4" fill="#fff" stroke="#c6c6c6" stroke-width="0.9"/>
<path d="M126.60 168 L131.60 168 L129.10 170.8 Z" fill="#555"/>
<rect x="183.50" y="163.6" width="11.6" height="11.4" fill="#fff" stroke="#c6c6c6" stroke-width="0.9"/>
<path d="M186.80 168 L191.80 168 L189.30 170.8 Z" fill="#555"/>
<rect x="243.10" y="163.6" width="11.6" height="11.4" fill="#fff" stroke="#c6c6c6" stroke-width="0.9"/>
<path d="M246.40 168 L251.40 168 L248.90 170.8 Z" fill="#555"/>
</svg>
<div class="t" style="left:77.60px;top:165.40px;font-size:9.6px;font-weight:bold;color:#000">Январь</div>
<div class="t" style="left:137.80px;top:165.40px;font-size:9.6px;font-weight:bold;color:#000">Февраль</div>
<div class="t" style="left:198.00px;top:165.40px;font-size:9.6px;font-weight:bold;color:#000">Март</div>
<div class="t" style="left:17.50px;top:179.85px;font-size:9.6px;color:#000">Анна</div>
<div class="t" style="left:75.60px;width:58.20px;text-align:right;top:179.85px;font-size:9.6px;color:#000">5</div>
<div class="t" style="left:135.80px;width:58.20px;text-align:right;top:179.85px;font-size:9.6px;color:#000">4</div>
<div class="t" style="left:196.00px;width:57.60px;text-align:right;top:179.85px;font-size:9.6px;color:#000">5</div>
<div class="t" style="left:17.50px;top:194.30px;font-size:9.6px;color:#000">Антон</div>
<div class="t" style="left:75.60px;width:58.20px;text-align:right;top:194.30px;font-size:9.6px;color:#000">7</div>
<div class="t" style="left:135.80px;width:58.20px;text-align:right;top:194.30px;font-size:9.6px;color:#000">5</div>
<div class="t" style="left:196.00px;width:57.60px;text-align:right;top:194.30px;font-size:9.6px;color:#000">2</div>
<div class="t" style="left:17.50px;top:208.75px;font-size:9.6px;color:#000">Генадий</div>
<div class="t" style="left:75.60px;width:58.20px;text-align:right;top:208.75px;font-size:9.6px;color:#000">4</div>
<div class="t" style="left:135.80px;width:58.20px;text-align:right;top:208.75px;font-size:9.6px;color:#000">7</div>
<div class="t" style="left:196.00px;width:57.60px;text-align:right;top:208.75px;font-size:9.6px;color:#000">6</div>
<div class="t" style="left:17.50px;top:223.20px;font-size:9.6px;color:#000">Станислав</div>
<div class="t" style="left:75.60px;width:58.20px;text-align:right;top:223.20px;font-size:9.6px;color:#000">1</div>
<div class="t" style="left:135.80px;width:58.20px;text-align:right;top:223.20px;font-size:9.6px;color:#000">5</div>
<div class="t" style="left:196.00px;width:57.60px;text-align:right;top:223.20px;font-size:9.6px;color:#000">6</div>
<div class="t" style="left:17.50px;top:237.65px;font-size:9.6px;color:#000">Алина</div>
<div class="t" style="left:75.60px;width:58.20px;text-align:right;top:237.65px;font-size:9.6px;color:#000">5</div>
<div class="t" style="left:135.80px;width:58.20px;text-align:right;top:237.65px;font-size:9.6px;color:#000">6</div>
<div class="t" style="left:196.00px;width:57.60px;text-align:right;top:237.65px;font-size:9.6px;color:#000">5</div>
<div class="t" style="left:17.50px;top:252.10px;font-size:9.6px;color:#000">Ирина</div>
<div class="t" style="left:75.60px;width:58.20px;text-align:right;top:252.10px;font-size:9.6px;color:#9c0006">8</div>
<div class="t" style="left:196.00px;width:57.60px;text-align:right;top:252.10px;font-size:9.6px;color:#000">4</div>
<div class="t" style="left:17.50px;top:266.55px;font-size:9.6px;color:#000">Александр</div>
<div class="t" style="left:75.60px;width:58.20px;text-align:right;top:266.55px;font-size:9.6px;color:#000">5</div>
<div class="t" style="left:135.80px;width:58.20px;text-align:right;top:266.55px;font-size:9.6px;color:#000">3</div>
<div class="t" style="left:17.50px;top:281.00px;font-size:9.6px;color:#000">Назарий</div>
<div class="t" style="left:75.60px;width:58.20px;text-align:right;top:281.00px;font-size:9.6px;color:#000">6</div>
<div class="t" style="left:135.80px;width:58.20px;text-align:right;top:281.00px;font-size:9.6px;color:#000">2</div>
<div class="t" style="left:196.00px;width:57.60px;text-align:right;top:281.00px;font-size:9.6px;color:#000">5</div>
<div class="t" style="left:17.50px;top:295.45px;font-size:9.6px;color:#000">Артем</div>
<div class="t" style="left:75.60px;width:58.20px;text-align:right;top:295.45px;font-size:9.6px;color:#000">1</div>
<div class="t" style="left:135.80px;width:58.20px;text-align:right;top:295.45px;font-size:9.6px;color:#000">7</div>
<div class="t" style="left:196.00px;width:57.60px;text-align:right;top:295.45px;font-size:9.6px;color:#000">5</div>
<div class="a" style="left:255.00px;top:363.90px;width:61.60px;height:15.85px;border:1.5px solid #217346"></div>
<div class="a" style="left:314.20px;top:377.25px;width:3.6px;height:3.6px;background:#217346;outline:0.8px solid #fff"></div>
<div class="a" style="left:327.9px;top:229.2px;width:348.1px;height:207.6px;background:#fff;border:1px solid #d9d9d9"></div>
<svg class="a" style="left:0;top:0" width="730" height="472"><defs>
<linearGradient id="g0" gradientUnits="userSpaceOnUse" x1="398" y1="0" x2="606" y2="0"><stop offset="0" stop-color="#3a62a8"/><stop offset="1" stop-color="#172642"/></linearGradient>
<linearGradient id="g1" gradientUnits="userSpaceOnUse" x1="398" y1="0" x2="606" y2="0"><stop offset="0" stop-color="#cb6b2a"/><stop offset="1" stop-color="#502a10"/></linearGradient>
<linearGradient id="g2" gradientUnits="userSpaceOnUse" x1="398" y1="0" x2="606" y2="0"><stop offset="0" stop-color="#8d8d8d"/><stop offset="1" stop-color="#383838"/></linearGradient>
<linearGradient id="g3" gradientUnits="userSpaceOnUse" x1="398" y1="0" x2="606" y2="0"><stop offset="0" stop-color="#dba500"/><stop offset="1" stop-color="#564100"/></linearGradient>
<linearGradient id="g4" gradientUnits="userSpaceOnUse" x1="398" y1="0" x2="606" y2="0"><stop offset="0" stop-color="#4e85b7"/><stop offset="1" stop-color="#1e3448"/></linearGradient>
<linearGradient id="g5" gradientUnits="userSpaceOnUse" x1="398" y1="0" x2="606" y2="0"><stop offset="0" stop-color="#60943d"/><stop offset="1" stop-color="#263a18"/></linearGradient>
<linearGradient id="g6" gradientUnits="userSpaceOnUse" x1="398" y1="0" x2="606" y2="0"><stop offset="0" stop-color="#203a67"/><stop offset="1" stop-color="#0c1728"/></linearGradient>
<linearGradient id="g7" gradientUnits="userSpaceOnUse" x1="398" y1="0" x2="606" y2="0"><stop offset="0" stop-color="#873d0c"/><stop offset="1" stop-color="#351804"/></linearGradient>
<linearGradient id="g8" gradientUnits="userSpaceOnUse" x1="398" y1="0" x2="606" y2="0"><stop offset="0" stop-color="#555555"/><stop offset="1" stop-color="#212121"/></linearGradient>
</defs>
<polygon points="605.40,314.78 605.40,315.21 605.39,315.63 605.37,316.06 605.34,316.49 602.89,337.75 602.92,337.30 602.94,336.85 602.96,336.40 602.96,335.95" fill="url(#g1)" stroke="url(#g1)" stroke-width="0.3"/>
<polygon points="605.34,316.49 605.17,318.07 604.89,319.65 604.50,321.24 604.00,322.84 603.38,324.43 602.64,326.02 601.78,327.61 600.81,329.19 599.72,330.77 598.51,332.34 597.17,333.89 595.72,335.44 594.14,336.96 592.45,338.47 590.63,339.95 588.69,341.42 586.64,342.85 584.46,344.26 582.17,345.64 580.06,368.47 582.30,367.02 584.43,365.54 586.44,364.03 588.34,362.49 590.12,360.93 591.79,359.34 593.34,357.74 594.77,356.11 596.08,354.48 597.28,352.82 598.36,351.16 599.32,349.49 600.17,347.82 600.90,346.14 601.52,344.46 602.03,342.77 602.42,341.10 602.71,339.42 602.89,337.75" fill="url(#g2)" stroke="url(#g2)" stroke-width="0.3"/>
<polygon points="582.17,345.64 579.30,347.23 576.28,348.77 573.09,350.26 569.76,351.68 567.94,374.82 571.19,373.32 574.30,371.76 577.26,370.14 580.06,368.47" fill="url(#g3)" stroke="url(#g3)" stroke-width="0.3"/>
<polygon points="569.76,351.68 566.87,352.82 563.89,353.92 560.81,354.96 557.64,355.96 554.39,356.90 551.05,357.79 547.64,358.62 544.15,359.39 540.60,360.11 536.98,360.76 533.31,361.35 529.58,361.87 525.81,362.33 522.01,362.72 518.16,363.04 514.30,363.30 510.41,363.49 506.51,363.61 502.59,363.66 498.68,363.63 494.78,363.54 490.88,363.38 487.00,363.16 483.15,362.86 483.67,386.54 487.42,386.85 491.19,387.09 494.97,387.26 498.77,387.35 502.57,387.37 506.37,387.32 510.17,387.20 513.95,387.00 517.71,386.73 521.45,386.39 525.15,385.98 528.81,385.50 532.44,384.95 536.01,384.34 539.53,383.65 542.99,382.91 546.38,382.10 549.70,381.22 552.95,380.29 556.12,379.30 559.21,378.26 562.21,377.16 565.12,376.01 567.94,374.82" fill="url(#g4)" stroke="url(#g4)" stroke-width="0.3"/>
<polygon points="483.15,362.86 479.39,362.50 475.66,362.08 471.97,361.59 468.33,361.04 464.75,360.42 461.22,359.75 457.75,359.02 454.35,358.23 451.02,357.38 447.77,356.49 444.61,355.53 441.52,354.53 438.53,353.48 435.63,352.39 432.82,351.25 430.11,350.07 427.51,348.85 425.01,347.59 422.61,346.30 420.32,344.97 418.14,343.61 416.08,342.23 414.12,340.82 412.28,339.39 410.56,337.93 408.94,336.46 407.45,334.96 406.06,333.46 404.80,331.94 403.64,330.41 402.60,328.87 401.68,327.33 400.86,325.78 400.16,324.22 399.57,322.67 399.09,321.12 398.72,319.57 398.45,318.03 398.28,316.49 400.73,337.75 400.91,339.38 401.18,341.01 401.56,342.65 402.05,344.28 402.64,345.92 403.34,347.56 404.14,349.19 405.06,350.82 406.09,352.44 407.23,354.05 408.47,355.65 409.83,357.24 411.31,358.81 412.89,360.36 414.58,361.89 416.39,363.40 418.30,364.89 420.33,366.34 422.46,367.77 424.70,369.16 427.04,370.52 429.48,371.84 432.03,373.12 434.67,374.36 437.41,375.56 440.24,376.71 443.15,377.81 446.16,378.86 449.25,379.86 452.41,380.80 455.65,381.69 458.96,382.51 462.33,383.28 465.77,383.99 469.26,384.63 472.80,385.21 476.38,385.72 480.01,386.16 483.67,386.54" fill="url(#g5)" stroke="url(#g5)" stroke-width="0.3"/>
<polygon points="398.28,316.49 398.26,316.06 398.24,315.63 398.23,315.21 398.22,314.78 400.66,335.95 400.67,336.40 400.68,336.85 400.70,337.30 400.73,337.75" fill="url(#g6)" stroke="url(#g6)" stroke-width="0.3"/>
<line x1="582.17" y1="345.64" x2="580.06" y2="368.47" stroke="#e8e8e8" stroke-width="0.6" opacity="0.8"/>
<line x1="569.76" y1="351.68" x2="567.94" y2="374.82" stroke="#e8e8e8" stroke-width="0.6" opacity="0.8"/>
<line x1="483.15" y1="362.86" x2="483.67" y2="386.54" stroke="#e8e8e8" stroke-width="0.6" opacity="0.8"/>
<polygon points="501.81,305.55 501.81,265.98 504.48,266.00 507.14,266.05 509.80,266.13 512.45,266.24 515.10,266.39 517.75,266.56 520.38,266.77 523.01,267.02 525.62,267.29 528.23,267.60 530.82,267.94 533.39,268.31 535.95,268.71 538.49,269.15 541.00,269.61 543.50,270.11 545.98,270.64 548.43,271.21 550.85,271.80 553.25,272.43 555.62,273.09 557.96,273.78 560.27,274.50 562.54,275.25" fill="#4472c4" stroke="#fff" stroke-width="0.55" stroke-linejoin="round"/>
<polygon points="501.81,305.55 562.54,275.25 564.75,276.03 566.92,276.84 569.06,277.67 571.15,278.54 573.20,279.43 575.21,280.36 577.17,281.31 579.09,282.30 580.95,283.31 582.77,284.35 584.53,285.42 586.23,286.52 587.88,287.64 589.47,288.80 590.99,289.97 592.45,291.18 593.85,292.41 595.18,293.66 596.43,294.94 597.62,296.25 598.72,297.57 599.76,298.92 600.71,300.29 601.58,301.68 602.37,303.09 603.07,304.52 603.68,305.96 604.21,307.43 604.64,308.91 604.97,310.40 605.22,311.90 605.36,313.42 605.40,314.95 605.34,316.49" fill="#ed7d31" stroke="#fff" stroke-width="0.55" stroke-linejoin="round"/>
<polygon points="501.81,305.55 605.34,316.49 605.17,318.07 604.89,319.65 604.50,321.24 604.00,322.84 603.38,324.43 602.64,326.02 601.78,327.61 600.81,329.19 599.72,330.77 598.51,332.34 597.17,333.89 595.72,335.44 594.14,336.96 592.45,338.47 590.63,339.95 588.69,341.42 586.64,342.85 584.46,344.26 582.17,345.64" fill="#a5a5a5" stroke="#fff" stroke-width="0.55" stroke-linejoin="round"/>
<polygon points="501.81,305.55 582.17,345.64 579.30,347.23 576.28,348.77 573.09,350.26 569.76,351.68" fill="#ffc000" stroke="#fff" stroke-width="0.55" stroke-linejoin="round"/>
<polygon points="501.81,305.55 569.76,351.68 566.87,352.82 563.89,353.92 560.81,354.96 557.64,355.96 554.39,356.90 551.05,357.79 547.64,358.62 544.15,359.39 540.60,360.11 536.98,360.76 533.31,361.35 529.58,361.87 525.81,362.33 522.01,362.72 518.16,363.04 514.30,363.30 510.41,363.49 506.51,363.61 502.59,363.66 498.68,363.63 494.78,363.54 490.88,363.38 487.00,363.16 483.15,362.86" fill="#5b9bd5" stroke="#fff" stroke-width="0.55" stroke-linejoin="round"/>
<polygon points="501.81,305.55 483.15,362.86 479.39,362.50 475.66,362.08 471.97,361.59 468.33,361.04 464.75,360.42 461.22,359.75 457.75,359.02 454.35,358.23 451.02,357.38 447.77,356.49 444.61,355.53 441.52,354.53 438.53,353.48 435.63,352.39 432.82,351.25 430.11,350.07 427.51,348.85 425.01,347.59 422.61,346.30 420.32,344.97 418.14,343.61 416.08,342.23 414.12,340.82 412.28,339.39 410.56,337.93 408.94,336.46 407.45,334.96 406.06,333.46 404.80,331.94 403.64,330.41 402.60,328.87 401.68,327.33 400.86,325.78 400.16,324.22 399.57,322.67 399.09,321.12 398.72,319.57 398.45,318.03 398.28,316.49" fill="#70ad47" stroke="#fff" stroke-width="0.55" stroke-linejoin="round"/>
<polygon points="501.81,305.55 398.28,316.49 398.22,314.93 398.27,313.39 398.42,311.85 398.66,310.33 399.01,308.82 399.45,307.32 399.99,305.84 400.62,304.38 401.34,302.94 402.14,301.51 403.04,300.11 404.01,298.73 405.07,297.36 406.20,296.03 407.41,294.71 408.70,293.42 410.05,292.16 411.48,290.92 412.97,289.70 414.53,288.52 416.15,287.36 417.83,286.23 419.57,285.13 421.37,284.05" fill="#264478" stroke="#fff" stroke-width="0.55" stroke-linejoin="round"/>
<polygon points="501.81,305.55 421.37,284.05 423.21,283.01 425.10,282.00 427.03,281.02 429.02,280.07 431.05,279.15 433.13,278.26 435.25,277.40 437.40,276.57 439.60,275.77 441.83,275.00 444.10,274.26 446.40,273.56 448.73,272.88 451.10,272.24 453.49,271.62 455.90,271.04 458.34,270.49 460.81,269.97 463.30,269.48 465.80,269.03 468.33,268.60 470.87,268.21 473.43,267.85 476.01,267.52 478.59,267.23 481.19,266.96 483.80,266.73 486.42,266.52 489.05,266.35" fill="#9e480e" stroke="#fff" stroke-width="0.55" stroke-linejoin="round"/>
<polygon points="501.81,305.55 489.05,266.35 492.23,266.19 495.42,266.08 498.62,266.01 501.81,265.98" fill="#636363" stroke="#fff" stroke-width="0.55" stroke-linejoin="round"/>
</svg>
<div class="t" style="left:402px;width:200px;text-align:center;top:240.6px;font-size:11.9px;color:#595959">Январь</div>
<div class="a" style="left:382.50px;top:406.50px;width:3px;height:3px;background:#4472c4"></div>
<div class="t" style="left:388.70px;top:403.70px;font-size:7.9px;color:#595959">Анна</div>
<div class="a" style="left:431.80px;top:406.50px;width:3px;height:3px;background:#ed7d31"></div>
<div class="t" style="left:438.00px;top:403.70px;font-size:7.9px;color:#595959">Антон</div>
<div class="a" style="left:481.10px;top:406.50px;width:3px;height:3px;background:#a5a5a5"></div>
<div class="t" style="left:487.30px;top:403.70px;font-size:7.9px;color:#595959">Генадий</div>
<div class="a" style="left:530.50px;top:406.50px;width:3px;height:3px;background:#ffc000"></div>
<div class="t" style="left:536.70px;top:403.70px;font-size:7.9px;color:#595959">Станислав</div>
<div class="a" style="left:579.50px;top:406.50px;width:3px;height:3px;background:#5b9bd5"></div>
<div class="t" style="left:585.70px;top:403.70px;font-size:7.9px;color:#595959">Алина</div>
<div class="a" style="left:382.50px;top:423.30px;width:3px;height:3px;background:#70ad47"></div>
<div class="t" style="left:388.70px;top:420.50px;font-size:7.9px;color:#595959">Ирина</div>
<div class="a" style="left:431.80px;top:423.30px;width:3px;height:3px;background:#264478"></div>
<div class="t" style="left:438.00px;top:420.50px;font-size:7.9px;color:#595959">Александр</div>
<div class="a" style="left:481.10px;top:423.30px;width:3px;height:3px;background:#9e480e"></div>
<div class="t" style="left:487.30px;top:420.50px;font-size:7.9px;color:#595959">Назарий</div>
<div class="a" style="left:530.50px;top:423.30px;width:3px;height:3px;background:#636363"></div>
<div class="t" style="left:536.70px;top:420.50px;font-size:7.9px;color:#595959">Артем</div>
</body></html>
